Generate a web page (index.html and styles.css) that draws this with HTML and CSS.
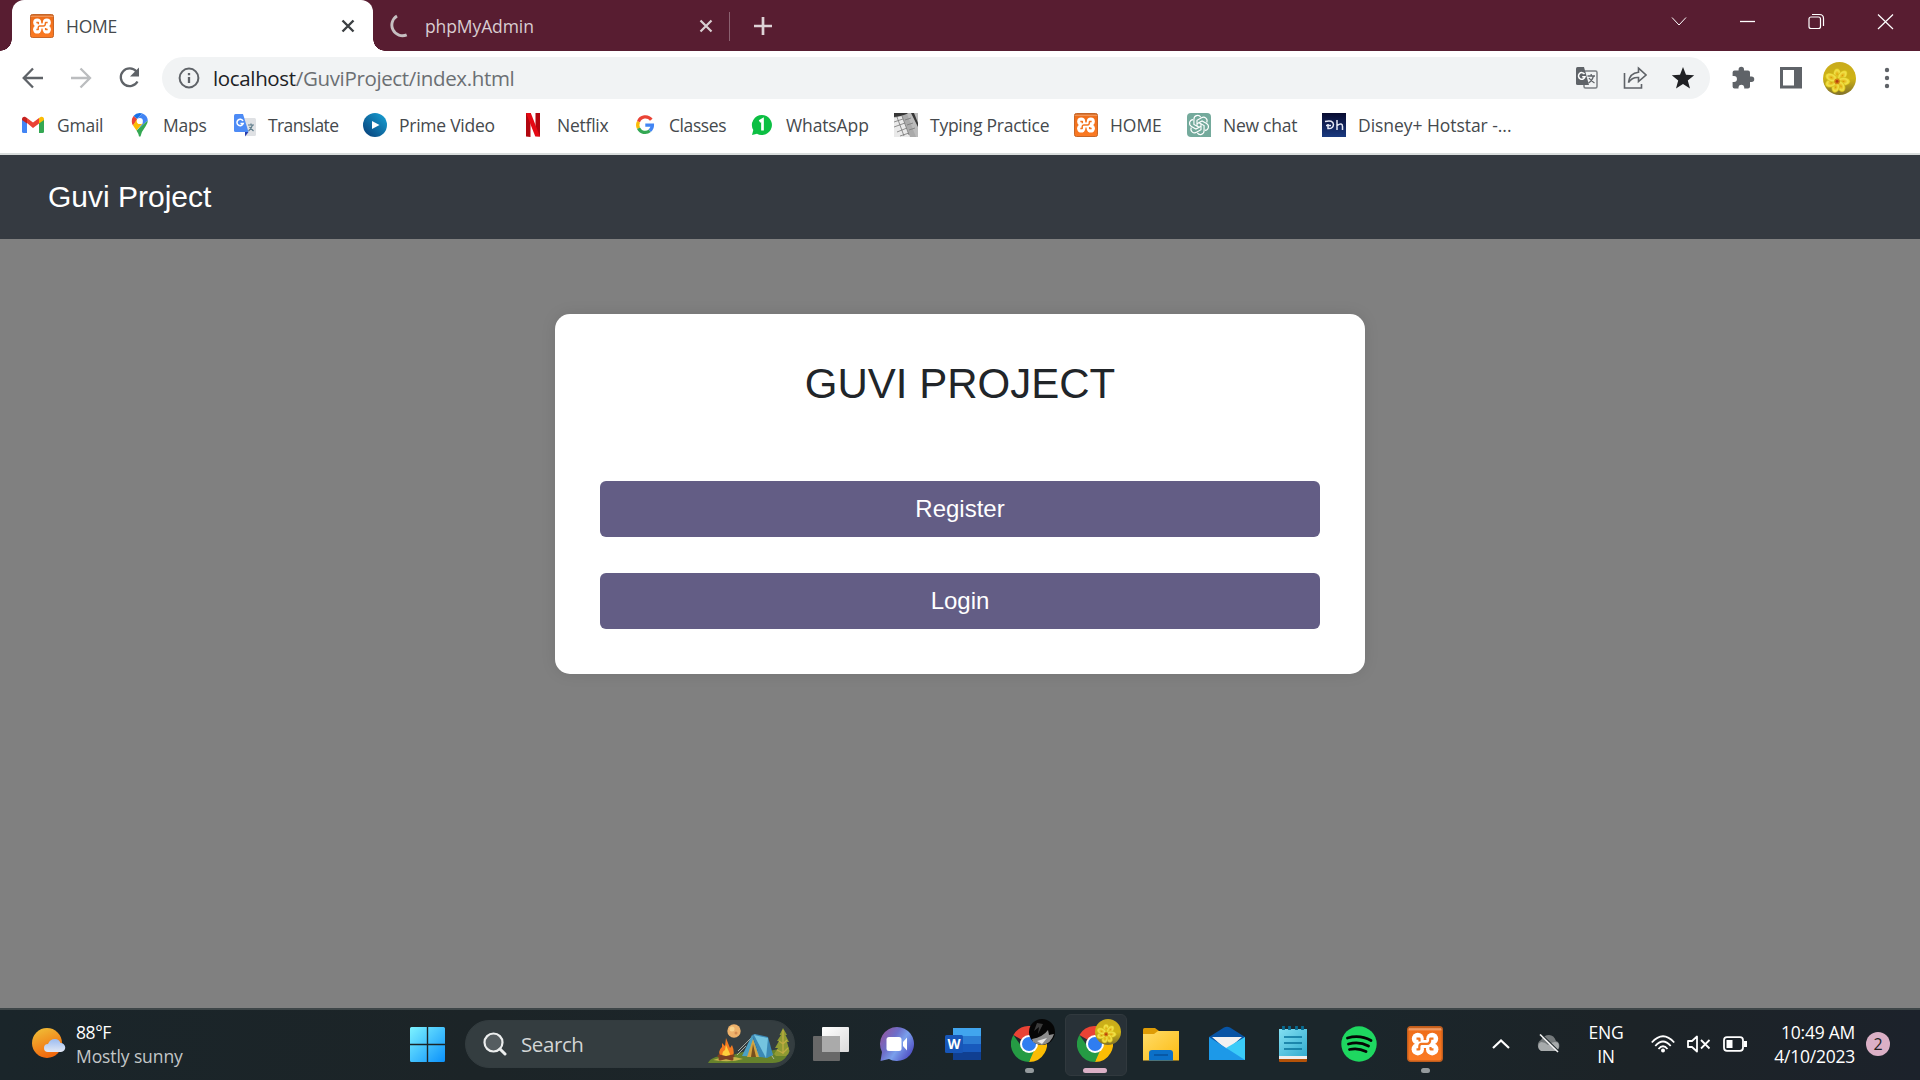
FILE: index.html
```html
<!DOCTYPE html>
<html lang="en">
<head>
<meta charset="utf-8">
<title>HOME</title>
<link rel="stylesheet" href="styles.css">
</head>
<body>
<svg class="defs" aria-hidden="true">
  <defs>
    <linearGradient id="orange" x2="0" y2="1"><stop offset="0" stop-color="#d4661c"/><stop offset=".04" stop-color="#d4661c"/><stop offset=".06" stop-color="#f3ad80"/><stop offset=".13" stop-color="#ef6e19"/><stop offset="1" stop-color="#fb7a24"/></linearGradient>
    <radialGradient id="flower"><stop offset="0" stop-color="#d9940c"/><stop offset=".18" stop-color="#e6b91a"/><stop offset=".65" stop-color="#f0e04a"/><stop offset="1" stop-color="#e8d21f"/></radialGradient>
    <linearGradient id="flowerbg" x2="0" y2="1"><stop offset="0" stop-color="#c9ab1c"/><stop offset=".5" stop-color="#cfb315"/><stop offset="1" stop-color="#80702a"/></linearGradient>
    <symbol id="xampp" viewBox="0 0 36 36">
      <rect x=".7" y=".7" width="34.6" height="34.6" rx="3" fill="url(#orange)" stroke="#c05d1d" stroke-width="1.4"/>
      <g fill="#fff"><circle cx="10.800" cy="12.800" r="6"/><circle cx="25.200" cy="12.800" r="6"/><circle cx="10.800" cy="23.200" r="6.200"/><circle cx="25.200" cy="23.200" r="6.200"/><path d="M9 14H27V22H9Z"/></g>
      <path d="M9.500 12.700H12.500V15.500M26.500 12.700H23.300Q23.300 17.900 20 17.900H14.500Q12.300 18 12.300 20.500V23.300H9.500M26.500 23.300H23.500V21" fill="none" stroke="#f2741f" stroke-width="2.200" stroke-linejoin="round"/>
    </symbol>
    <symbol id="chrome" viewBox="0 0 36 36">
      <path d="M18 18 2.400 9A18 18 0 0 1 33.600 9Z" fill="#ea4335"/>
      <path d="M18 18 33.600 9A18 18 0 0 1 18 36L22 22Z" fill="#fbbc04"/>
      <path d="M18 18 24 22.500 18 36A18 18 0 0 1 2.400 9L11 21Z" fill="#259b44"/>
      <path d="M18 9H33.600L34.200 10.400 24 18Z" fill="#fbbc04"/>
      <circle cx="18" cy="18" r="9" fill="#fff"/><circle cx="18" cy="18" r="7" fill="#2f7df0"/>
    </symbol>
    <symbol id="bloom" viewBox="0 0 34 34">
      <circle cx="17" cy="17" r="17" fill="url(#flowerbg)"/>
      <g fill="url(#flower)" stroke="#c4ac1c" stroke-width=".4">
        <ellipse cx="14.500" cy="12.500" rx="4" ry="6"/><ellipse cx="20" cy="14" rx="4" ry="6.500" transform="rotate(40 20 14)"/>
        <ellipse cx="21" cy="20" rx="7" ry="4.300"/><ellipse cx="18.500" cy="25" rx="4" ry="6" transform="rotate(-25 18.500 25)"/>
        <ellipse cx="13" cy="26" rx="4" ry="5.500" transform="rotate(15 13 26)"/><ellipse cx="8.500" cy="21.500" rx="6.500" ry="4.300" transform="rotate(-20 8.500 21.500)"/>
        <ellipse cx="8.500" cy="16" rx="6.500" ry="4.300" transform="rotate(25 8.500 16)"/>
      </g>
      <circle cx="14.500" cy="20" r="2.900" fill="#d58410"/><circle cx="14.500" cy="20" r="1.500" fill="#b23e12"/>
    </symbol>
  </defs>
</svg>

<div class="tabstrip">
  <div class="tab active">
    <svg class="i24"><use href="#xampp"/></svg>
    <span class="tab-title">HOME</span>
    <svg class="close" viewBox="0 0 14 14"><path d="M1.500 1.500 12.500 12.500M12.500 1.500 1.500 12.500" stroke="#3c4043" stroke-width="2.400"/></svg>
  </div>
  <div class="tab">
    <svg class="i24" viewBox="0 0 24 24"><path d="M8.500 1.700A10.600 10.600 0 1 0 18.500 20.600" fill="none" stroke="none"/><path d="M9 2A10.600 10.600 0 0 0 18.700 20.800" fill="none" stroke="#c6bfc1" stroke-width="2.900"/></svg>
    <span class="tab-title pma">phpMyAdmin</span>
    <svg class="close" viewBox="0 0 14 14"><path d="M1.500 1.500 12.500 12.500M12.500 1.500 1.500 12.500" stroke="#d9cfd2" stroke-width="2.200"/></svg>
  </div>
  <svg class="newtab" viewBox="0 0 18 18"><path d="M9 0V18M0 9H18" stroke="#ded3d7" stroke-width="2.700"/></svg>
  <svg class="winctl" viewBox="0 0 224 18" fill="none" stroke="#fff" stroke-width="1.200">
    <path d="M1 4.500 8 12 15 4.500" stroke-width="1"/><path d="M69 8.500H84" stroke-width="1.300"/>
    <rect x="138" y="4" width="11.500" height="11.500" rx="2"/><path d="M141 1.500H148.500Q152.500 1.500 152.500 5.500V13"/>
    <path d="M207 1.500 222 16M222 1.500 207 16"/>
  </svg>
</div>

<div class="toolbar">
  <svg class="nav" viewBox="0 0 120 24" fill="none" stroke="#5f6368" stroke-width="2.300">
    <path d="M21 12H2M11 2.500 1.700 12 11 21.500"/>
    <path d="M49 12H67M58.500 2.500 68 12 58.500 21.500" stroke="#bbbdbf"/>
    <path d="M114.500 5.500A8.900 8.900 0 1 0 115.500 15.500"/><path d="M117 1.500V10.500H108Z" fill="#5f6368" stroke="none"/>
  </svg>
  <div class="omnibox">
    <svg class="info" viewBox="0 0 22 22"><circle cx="11" cy="11" r="9.400" fill="none" stroke="#5f6368" stroke-width="2"/><path d="M11 10V16M11 6V8.200" stroke="#5f6368" stroke-width="2.300"/></svg>
    <span class="url"><b>localhost</b>/GuviProject/index.html</span>
    <svg class="i24" viewBox="0 0 24 24">
      <rect x="9" y="5" width="13" height="17" rx="1.500" fill="#f1f3f4" stroke="#7b7f83" stroke-width="1.500"/>
      <path d="M2.500 1H9L14 19H2.500Q1 19 1 17.500V2.500Q1 1 2.500 1Z" fill="#5f6368"/>
      <path d="M9.500 8A3.300 3.300 0 1 0 10 10.800H7.200" fill="none" stroke="#fff" stroke-width="1.500"/>
      <path d="M12.500 10H20M16.200 8V10M18.500 10Q17 15 13.500 17M14 12Q16 15 19.500 17" fill="none" stroke="#5f6368" stroke-width="1.300"/>
    </svg>
    <svg class="i24" viewBox="0 0 24 24" fill="none" stroke="#5f6368" stroke-width="1.600"><path d="M1.500 7V22H18.500V18"/><path d="M15.500 2.200 23 9 15.500 15.500V11.500Q9 11 5.500 16.500Q6.500 7 15.500 6.200Z"/></svg>
    <svg class="i24" viewBox="0 0 24 24"><path d="M12 1 15 8.700 23.200 9.200 16.800 14.500 19 22.600 12 18 5 22.600 7.200 14.500.8 9.200 9 8.700Z" fill="#202124"/></svg>
  </div>
  <svg class="i24" viewBox="0 0 24 24"><path d="M20.500 10.500H19V6.500Q19 4.500 17 4.500H13V3.500A2.700 2.700 0 0 0 7.600 3.500V4.500H3.500Q1.600 4.500 1.600 6.500V10H3A2.900 2.900 0 0 1 3 15.900H1.600V20.500Q1.600 22.500 3.500 22.500H7.500V21A2.900 2.900 0 0 1 13.200 21V22.500H17Q19 22.500 19 20.500V16H20.500A2.750 2.750 0 0 0 20.500 10.500Z" fill="#5f6368"/></svg>
  <svg class="i24" viewBox="0 0 24 24"><path d="M1 1H23V22.500H1ZM4 4V19.500H15V4Z" fill="#5f6368" fill-rule="evenodd"/></svg>
  <svg class="avatar"><use href="#bloom"/></svg>
  <svg class="dots" viewBox="0 0 6 22" fill="#5f6368"><circle cx="3" cy="3" r="2.200"/><circle cx="3" cy="11" r="2.200"/><circle cx="3" cy="19" r="2.200"/></svg>
</div>

<div class="bookmarks">
  <div><svg class="i24" viewBox="0 0 24 24"><path d="M1 6V18.500Q1 20 2.500 20H6V9Z" fill="#4285f4"/><path d="M18 9V20H21.500Q23 20 23 18.500V6Z" fill="#34a853"/><path d="M6 10V5L12 9.500 18 5V10.500L12 15Z" fill="#ea4335"/><path d="M1 6.500Q1 3.500 4 3.800L6 5V10.500L1 7Z" fill="#c5221f"/><path d="M23 6.500Q23 3.500 20 3.800L18 5V10.500L23 7Z" fill="#fbbc04"/></svg><span>Gmail</span></div>
  <div><svg class="i24" viewBox="0 0 24 24"><path d="M12.800 0A8 8 0 0 0 6.500 3L10 6 15.500.5Q14 0 12.800 0Z" fill="#1a73e8"/><path d="M6.500 3Q4.500 5.500 4.800 9Q5 11 6 12.500L10.500 6.500Z" fill="#ea4335"/><path d="M15.500.5Q20.500 2.500 20.800 7.500L10.500 17 16 10 10 6Z" fill="#4285f4"/><path d="M6 12.500 10 6Q9.500 10 13 11L16 10 9.500 17.500Z" fill="#fbbc04"/><path d="M20.800 7.500Q21 10 18.500 13.500Q14.500 18.500 13.500 23.500H12Q11.500 20.500 9.500 17.500Z" fill="#34a853"/><circle cx="12.800" cy="8" r="3.100" fill="#fff"/></svg><span>Maps</span></div>
  <div><svg class="i24" viewBox="0 0 24 24"><path d="M10 5H22.500Q24 5 24 6.500V21.500Q24 23 22.500 23H14Z" fill="#dfe1e4"/><path d="M13 19H16.500L13 23.500Z" fill="#283dac"/><path d="M3.500 1H11L16.500 19H3.500Q2 19 2 17.500V2.500Q2 1 3.500 1Z" fill="#4d8bf5"/><path d="M11 8A3.200 3.200 0 1 0 11.200 10.500H8.500" fill="none" stroke="#fff" stroke-width="1.500"/><path d="M16 12H22M19 10.500V12M20.500 12Q19.500 15.500 16.500 18M17.500 14 21.500 18" fill="none" stroke="#607d8b" stroke-width="1.200"/></svg><span class="tight">Translate</span></div>
  <div><svg class="i24" viewBox="0 0 24 24"><linearGradient id="pv" x1="1" y1="0" x2="0" y2="1"><stop stop-color="#18a5d8"/><stop offset="1" stop-color="#073b75"/></linearGradient><circle cx="12" cy="12" r="12" fill="url(#pv)"/><path d="M9 8 16.500 12 9 16Z" fill="#fff"/></svg><span>Prime Video</span></div>
  <div><svg class="i24" viewBox="0 0 24 24"><path d="M5 0H9.500V24L5 23.500ZM14.500 0H19V23.500L14.500 23Z" fill="#b1060f"/><path d="M5 0H9.800L19 23.500 14.300 23.500Z" fill="#e50914"/></svg><span>Netflix</span></div>
  <div><svg class="i24" viewBox="0 0 24 24" fill="none" stroke-width="3.300"><path d="M18.300 6.700A7.400 7.400 0 0 0 5.500 8.700" stroke="#ea4335"/><path d="M5.500 8.700A7.400 7.400 0 0 0 5.500 15.300" stroke="#fbbc05"/><path d="M5.500 15.300A7.400 7.400 0 0 0 16.800 17.800" stroke="#34a853"/><path d="M16.800 17.800A7.400 7.400 0 0 0 19.400 12.100H12.300" stroke="#4285f4"/></svg><span class="snug">Classes</span></div>
  <div><svg class="i24" viewBox="0 0 24 24"><path d="M12 2A10 10 0 1 1 7 20.700L2 22 3.300 17A10 10 0 0 1 12 2Z" fill="#0cbf43"/><path d="M9.500 8.500 12.500 6.700V17.500" fill="none" stroke="#fff" stroke-width="2.700"/></svg><span class="open">WhatsApp</span></div>
  <div><svg class="i24" viewBox="0 0 24 24"><path fill="#bbb" d="M0 0H24V24H0Z"/><path d="M0 0H14L10 3 0 4ZM17 0H20L24 10V14ZM0 21H8V24H0Z" fill="#373737"/><path d="M0 5 13 1 22 24H9Z" fill="#aaa"/><path d="M0 5 8 3 16 24H0Z" fill="#e9e9e9"/><path d="M0 9 9 6M0 14 11 10M3 19 13 15M6 23 15 20M3 4 10 23M8 3 15 22M11 7 17 5M13 12 19 10M15 17 21 15" stroke="#777" stroke-width=".8"/></svg><span>Typing Practice</span></div>
  <div><svg class="i24"><use href="#xampp"/></svg><span class="wide">HOME</span></div>
  <div><svg class="i24" viewBox="0 0 24 24"><path d="M4 0H20Q24 0 24 4V24H4Q0 24 0 20V4Q0 0 4 0Z" fill="#74aa9c"/><g fill="none" stroke="#fff" stroke-width="1.150"><path id="petal" d="M10 13.200V7.300L14.500 4.700A3.700 3.700 0 0 1 19.700 9.500"/><use href="#petal" transform="rotate(60 12 12)"/><use href="#petal" transform="rotate(120 12 12)"/><use href="#petal" transform="rotate(180 12 12)"/><use href="#petal" transform="rotate(240 12 12)"/><use href="#petal" transform="rotate(300 12 12)"/></g></svg><span>New chat</span></div>
  <div><svg class="i24" viewBox="0 0 24 24"><linearGradient id="hs" x2="0" y2="1"><stop stop-color="#080b30"/><stop offset="1" stop-color="#1a3a80"/></linearGradient><path fill="url(#hs)" d="M0 0H24V24H0Z"/><path d="M3 8.500Q11 6.500 11.500 11.500Q11 16 6 15.500V11M4 12.500H9M15 7V17M15 12.500Q20.500 9 20.500 13.500V17" fill="none" stroke="#e6e9f5" stroke-width="1.500"/></svg><span class="wide">Disney+ Hotstar -...</span></div>
</div>

<main class="page">
  <nav class="navbar"><a class="brand">Guvi Project</a></nav>
  <section class="card">
    <h1>GUVI PROJECT</h1>
    <a class="btn">Register</a>
    <a class="btn">Login</a>
  </section>
</main>

<footer class="taskbar">
  <div class="weather">
    <svg class="sun" viewBox="0 0 34 32"><linearGradient id="sg" x2=".4" y2="1"><stop stop-color="#efc43a"/><stop offset="1" stop-color="#f2690d"/></linearGradient><linearGradient id="cg" x2="0" y2="1"><stop stop-color="#9cbcf0"/><stop offset="1" stop-color="#e2e8f5"/></linearGradient><circle cx="15" cy="16" r="15" fill="url(#sg)"/><path d="M16 25A4 4 0 0 1 16 17Q18 12 23 12Q27 12 28.500 16A4.500 4.500 0 0 1 29 25Z" fill="url(#cg)"/></svg>
    <div class="lines"><span class="temp">88°F</span><span class="cond">Mostly sunny</span></div>
  </div>
  <svg class="start" viewBox="0 0 35 35"><linearGradient id="wg" gradientUnits="userSpaceOnUse" x2="35" y2="35"><stop stop-color="#7df3ff"/><stop offset="1" stop-color="#0b91fb"/></linearGradient><path fill="url(#wg)" d="M1.500 0H16.800V16.800H0V1.500Q0 0 1.500 0ZM18.200 0H33.500Q35 0 35 1.500V16.800H18.200ZM0 18.200H16.800V35H1.500Q0 35 0 33.500ZM18.200 18.200H35V33.500Q35 35 33.500 35H18.200Z"/></svg>
  <div class="search">
    <svg class="mag" viewBox="0 0 24 24" fill="none" stroke="#eceeee"><circle cx="10.500" cy="10.500" r="9" stroke-width="2.200" fill="#555d60"/><path d="M17 17 22 22" stroke-width="3" stroke-linecap="round"/></svg>
    <span>Search</span>
    <svg class="camp" viewBox="0 0 82 40">
      <path d="M0 39Q3 31 25 31Q40 25 56 28L81 23Q80 39 64 39Z" fill="#66822c"/><path d="M5 36Q20 30 35 35Q22 39 5 36Z" fill="#c5b34a"/>
      <circle cx="26" cy="7" r="6.700" fill="#eeb26b"/><circle cx="24" cy="5" r="2.500" fill="#f8d48e"/><circle cx="28" cy="9" r="1.500" fill="#d38b50"/>
      <path d="M75 4 79 11 77.500 11 81 18 79 18 81.500 27Q81 30 78 32H68L66 30 70 24 67 24 71 17 69 17 73 11 71.500 11Z" fill="#8f9a32"/><path d="M75 6V30M71 17 75 20 79 16M69 26 75 29 80 24" stroke="#c0ac43" stroke-width="1.300" fill="none"/>
      <path d="M30 27 47 10 65 31M38 22 29 31M60 26 66 35" fill="none" stroke="#c1c7bd" stroke-width=".8"/>
      <path d="M34 32 44 11 52 33Z" fill="#4ba0c3"/><path d="M44 11 47 10 60 13 65 31 59 34 52 33Z" fill="#3b89b6"/><path d="M46 11 60 14 58 34Z" fill="#74c4df"/><path d="M45 15 39 33 51 33Z" fill="#d4a43f"/><path d="M45 20 43 33 48 33Z" fill="#76501f"/>
      <path d="M13 34Q9 27 14 23L14 19 17 22 18 14 22 24 24 21Q28 30 23 34Z" fill="#f37a20"/><path d="M15 34Q13 28 17 26L18 21 22 30 21 34Z" fill="#ffcf3c"/>
      <path d="M11 32 24 35M25 32 12 35" stroke="#7d3f22" stroke-width="3" stroke-linecap="round"/>
    </svg>
  </div>
  <div class="apps">
    <div><svg class="i36" viewBox="0 0 36 36"><linearGradient id="tw" x2="1" y2="1"><stop stop-color="#fff"/><stop offset="1" stop-color="#dadada"/></linearGradient><rect x="9" y="1" width="27" height="25" rx="1" fill="url(#tw)"/><rect y="10" width="27" height="25" rx="1" fill="#686868"/><path d="M9 10H27V26H9Z" fill="#aaa"/></svg></div>
    <div><svg class="i36" viewBox="0 0 36 36"><linearGradient id="cb" x1=".1" x2="1" y2=".6"><stop stop-color="#95559c"/><stop offset=".4" stop-color="#6d6fca"/><stop offset=".65" stop-color="#7aa0ec"/><stop offset="1" stop-color="#5558c8"/></linearGradient><path d="M18 1A17 17 0 1 1 10 33L1.500 35 3 26A17 17 0 0 1 18 1Z" fill="url(#cb)"/><rect x="7.500" y="11" width="15" height="14" rx="2.500" fill="#fff"/><path d="M24 16 28 11.500V24.500L24 20Z" fill="#fff"/></svg></div>
    <div><svg class="i36" viewBox="0 0 36 36"><path d="M8 2H36V10H8Z" fill="#41a5ee"/><path d="M8 10H36V18H8Z" fill="#2b7cd3"/><path d="M8 18H36V26H8Z" fill="#185abd"/><path d="M8 26H36V34H8Z" fill="#103f91"/><rect y="9" width="18" height="18" rx="1.500" fill="#1756b8"/><text x="9" y="22.500" text-anchor="middle" font-family="Open Sans, sans-serif" font-size="13.500" font-weight="700" fill="#fff">W</text></svg></div>
    <div class="running"><svg class="i36"><use href="#chrome"/></svg><svg class="pbadge" viewBox="0 0 26 26"><circle cx="13" cy="13" r="13" fill="#060606"/><path d="M3 20Q14 18 19 11L20 16 25 15Q22 25 13 26Q8 26 4 23Z" fill="#8c8c8c"/><path d="M8 4 5 12 10 8 9 15 14 5Z" fill="#3b3b3b"/><path d="M8 22 18 19 13 25Z" fill="#e8e8e8"/></svg></div>
    <div class="running current"><svg class="i36"><use href="#chrome"/></svg><svg class="pbadge"><use href="#bloom"/></svg></div>
    <div><svg class="i36" viewBox="0 0 36 36"><linearGradient id="fe" x2="1" y2="1"><stop stop-color="#ffdc68"/><stop offset="1" stop-color="#fdbb12"/></linearGradient><path d="M0 3.500Q0 2 1.500 2H12L16 5V9H0Z" fill="#df9c06"/><path d="M0 8H11L15 5H36V34.500H0Z" fill="url(#fe)"/><path d="M6 34.500V27Q6 24 9 24H27Q30 24 30 27V34.500Z" fill="#0b70c8"/><path d="M11 29H25" stroke="#07509b" stroke-width="1.500"/></svg></div>
    <div><svg class="i36" viewBox="0 0 36 36"><path d="M0 11 15 1.500Q18 0 21 1.500L36 11V20H0Z" fill="#0754a5"/><path d="M3 11H33L18 24Z" fill="#f1f1f1"/><path d="M36 11V34H28L17 22Z" fill="#3acbf8"/><path d="M0 11 36 34H0Z" fill="#1d99e8"/></svg></div>
    <div><svg class="i36" viewBox="0 0 36 36"><linearGradient id="np" x2="1" y2="1"><stop stop-color="#83dff2"/><stop offset="1" stop-color="#32acd0"/></linearGradient><path d="M4 31H32V35Q32 36 31 36H5Q4 36 4 35Z" fill="#b45208"/><path d="M4 29H32V33H4Z" fill="#eee"/><path d="M4 3H32V30H4Z" fill="url(#np)"/><path d="M8.500 0V4M14.500 0V4M21.500 0V4M27.500 0V4" stroke="#076b91" stroke-width="2.800"/><path d="M9 11H27M9 17H27M9 23H27" stroke="#08719a" stroke-width="1.700"/></svg></div>
    <div><svg class="i36" viewBox="0 0 36 36"><circle cx="18" cy="18" r="17.700" fill="#1ed760"/><path d="M6.500 12Q19 8.500 30 14.500M7.500 18Q18 15 27.500 20M8.500 23.500Q17 21.500 25 25.500" fill="none" stroke="#050505" stroke-width="2.800" stroke-linecap="round"/></svg></div>
    <div class="running"><svg class="i36"><use href="#xampp"/></svg></div>
  </div>
  <div class="tray">
    <svg class="up" viewBox="0 0 18 10"><path d="M1 9 9 1.500 17 9" fill="none" stroke="#fff" stroke-width="2.200"/></svg>
    <svg class="cloud" viewBox="0 0 24 20"><path d="M6 17A6 6 0 0 1 5 6Q8 1 13 1Q18 1 20 7A5.200 5.200 0 0 1 19 17Z" fill="#74797b"/><path d="M5 17A5 5 0 0 1 5 8Q9 8 12 11Q17 7 21.500 8.500A5.200 5.200 0 0 1 19 17Z" fill="#a7abac"/><path d="M5 0 23 17.500" stroke="#1b2428" stroke-width="1.500"/><path d="M4 .5 22 18" stroke="#f4f4f4" stroke-width="1.600"/></svg>
    <div class="lines lang"><span>ENG</span><span>IN</span></div>
    <svg class="status" viewBox="0 0 96 20" fill="none" stroke="#fff" stroke-width="1.800">
      <path d="M.8 8.500Q12 -4 23.200 8.500M4.300 12Q12 3 19.700 12M7.500 15Q12 9.500 16.500 15"/><circle cx="12" cy="16.500" r="2" fill="#fff" stroke="none"/>
      <path d="M37 7H41L46 2.500V17.500L41 13H37Z" stroke-linejoin="round"/><path d="M50 6 58.500 14.500M58.500 6 50 14.500"/>
      <rect x="73" y="3.200" width="19" height="13.600" rx="3"/><rect x="75.500" y="6" width="6" height="8" fill="#fff" stroke="none"/><path d="M94.500 7V13" stroke-width="3"/>
    </svg>
    <div class="lines clock"><span>10:49 AM</span><span>4/10/2023</span></div>
    <span class="count">2</span>
  </div>
</footer>
</body>
</html>
```
FILE: styles.css
```css
* { box-sizing: border-box; }
body {
  margin: 0;
  width: 1920px;
  height: 1080px;
  overflow: hidden;
  display: flex;
  flex-direction: column;
  background: #fff;
  font-family: "Open Sans", "Noto Sans", sans-serif;
  font-size: 17.5px;
  letter-spacing: -.25px;
  white-space: nowrap;
}
svg { display: block; flex: none; }
.defs { position: absolute; width: 0; height: 0; }
.i24 { width: 24px; height: 24px; }
.i36 { width: 36px; height: 36px; }

/* tab strip */
.tabstrip { height: 51px; background: #581d31; display: flex; align-items: center; padding-left: 12px; }
.tab { position: relative; width: 361px; height: 51px; display: flex; align-items: center; padding: 0 18px; color: #d9cdd1; }
.tab.active { background: #fff; color: #45494d; border-radius: 12px 12px 0 0; }
.tab.active::before, .tab.active::after { content: ""; position: absolute; bottom: 0; width: 12px; height: 12px; }
.tab.active::before { left: -12px; background: radial-gradient(circle at 0 0, transparent 11.500px, #fff 12px); }
.tab.active::after { right: -12px; background: radial-gradient(circle at 100% 0, transparent 11.500px, #fff 12px); }
.tab-title { margin-left: 12px; }
.tab + .tab { width: 357px; padding: 0 17px 0 15px; }
.tab + .tab::after { content: ""; position: absolute; right: 0; top: 12px; width: 1px; height: 29px; background: #8b6170; }
.tab-title.pma { margin-left: 13px; letter-spacing: -.1px; }
.close { width: 14px; height: 14px; margin-left: auto; }
.newtab { width: 18px; height: 18px; margin-left: 24px; }
.winctl { width: 224px; height: 18px; margin: 0 25px 8px auto; }

/* toolbar */
.toolbar { height: 54px; display: flex; align-items: center; padding-left: 22px; }
.nav { width: 120px; height: 24px; }
.omnibox { width: 1548px; height: 42px; margin-left: 20px; border-radius: 21px; background: #f1f3f4; display: flex; align-items: center; gap: 24px; padding: 0 15px 0 16px; }
.info { width: 22px; height: 22px; }
.url { flex: 1; margin-left: -11px; font-size: 20.5px; letter-spacing: -.35px; color: #6b6f73; }
.url b { font-weight: 400; color: #202124; }
.omnibox + .i24 { margin: 0 24px 0 21px; }
.avatar { width: 33px; height: 33px; margin-left: 20px; }
.dots { width: 6px; height: 22px; margin-left: 28px; }

/* bookmarks */
.bookmarks { height: 50px; padding: 0 0 8px 21px; border-bottom: 2px solid #d9dddc; display: grid; align-items: center; grid-template-columns: 106px 105px 131px 158px 112px 117px 144px 180px 113px 135px 200px; color: #45494d; }
.bookmarks > div { display: flex; align-items: center; gap: 12px; }
.tight { letter-spacing: -.6px; }
.snug { letter-spacing: -.42px; }
.open { letter-spacing: -.12px; }
.wide { letter-spacing: -.05px; }

/* page */
.page { flex: 1; background: #808080; font-family: "Liberation Sans", Arial, sans-serif; letter-spacing: 0; }
.navbar { height: 84px; padding: 0 48px; background: #353a41; display: flex; align-items: center; }
.brand { color: #fff; font-size: 30px; }
.card { width: 810px; height: 360px; margin: 75px auto 0; padding: 45px; border-radius: 15px; background: #fff; box-shadow: 0 0 15px rgba(0, 0, 0, .1); }
h1 { margin: 0 0 72px; font-size: 42px; line-height: 50px; font-weight: 400; text-align: center; color: #212529; }
.btn { display: flex; align-items: center; justify-content: center; height: 56px; border-radius: 6px; background: #635d85; color: #fff; font-size: 24px; }
.btn + .btn { margin-top: 36px; }

/* taskbar */
.taskbar { height: 72px; padding: 0 0 2px 32px; border-top: 2px solid #3e4648; background: linear-gradient(90deg, #1a252a, #1c2427 25%, #1b262b 50%, #1b262b 70%, #1c2327 85%, #1c222b); display: flex; align-items: center; color: #fff; }
.weather { width: 378px; display: flex; align-items: center; gap: 10px; }
.sun { width: 34px; height: 32px; margin-top: -2px; }
.lines { display: flex; flex-direction: column; line-height: 24px; }
.temp { letter-spacing: -.4px; }
.cond { color: #c3c7c8; letter-spacing: -.1px; }
.start { width: 35px; height: 35px; }
.search { width: 330px; height: 48px; margin-left: 20px; border-radius: 24px; border: 1px solid #333c3f; background: #343d40; display: flex; align-items: center; padding: 0 4px 0 17px; font-size: 20.5px; letter-spacing: -.4px; color: #d2d5d6; }
.mag { width: 24px; height: 24px; margin-right: 14px; }
.camp { width: 82px; height: 40px; margin-left: auto; }
.apps { display: flex; margin-left: 3px; }
.apps > div { position: relative; width: 66px; height: 60px; display: flex; align-items: center; justify-content: center; }
.running::after { content: ""; position: absolute; bottom: 1px; width: 9px; height: 5px; border-radius: 3px; background: #949a9d; }
.current::before { content: ""; position: absolute; left: 3px; top: 0; width: 60px; height: 60px; border: 1px solid #31393e; border-radius: 6px; background: #283137; }
.current .i36 { position: relative; }
.current::after { width: 24px; background: #dbb0c6; }
.pbadge { position: absolute; left: 33px; top: 5px; width: 26px; height: 26px; }
.tray { display: flex; align-items: center; margin-left: 34px; }
.up { width: 18px; height: 10px; }
.cloud { width: 24px; height: 20px; margin-left: 26px; }
.lang { width: 36px; margin-left: 28px; align-items: center; }
.status { width: 96px; height: 20px; margin-left: 27px; }
.clock { width: 84px; margin-left: 24px; align-items: flex-end; }
.count { width: 24px; height: 24px; margin-left: 11px; border-radius: 50%; background: #dbb0c6; color: #222; font-size: 16px; line-height: 24px; text-align: center; }
```
